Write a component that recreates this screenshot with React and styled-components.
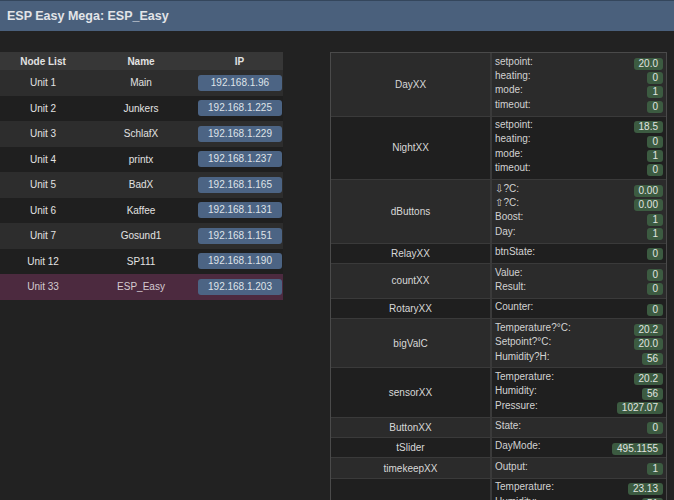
import React from 'react';
import styled, { createGlobalStyle } from 'styled-components';

const GlobalStyle = createGlobalStyle`
  html, body {
    margin: 0;
    padding: 0;
    background: #222222;
    overflow: hidden;
    font-family: "Liberation Sans", Arial, "DejaVu Sans", sans-serif;
    color: #dddddd;
  }
`;

const nodes = [
  { unit: 'Unit 1', name: 'Main', ip: '192.168.1.96' },
  { unit: 'Unit 2', name: 'Junkers', ip: '192.168.1.225' },
  { unit: 'Unit 3', name: 'SchlafX', ip: '192.168.1.229' },
  { unit: 'Unit 4', name: 'printx', ip: '192.168.1.237' },
  { unit: 'Unit 5', name: 'BadX', ip: '192.168.1.165' },
  { unit: 'Unit 6', name: 'Kaffee', ip: '192.168.1.131' },
  { unit: 'Unit 7', name: 'Gosund1', ip: '192.168.1.151' },
  { unit: 'Unit 12', name: 'SP111', ip: '192.168.1.190' },
  { unit: 'Unit 33', name: 'ESP_Easy', ip: '192.168.1.203', current: true },
];

const devices = [
  { name: 'DayXX', values: [['setpoint:', '20.0'], ['heating:', '0'], ['mode:', '1'], ['timeout:', '0']] },
  { name: 'NightXX', values: [['setpoint:', '18.5'], ['heating:', '0'], ['mode:', '1'], ['timeout:', '0']] },
  { name: 'dButtons', values: [['\u21E9?C:', '0.00'], ['\u21E7?C:', '0.00'], ['Boost:', '1'], ['Day:', '1']] },
  { name: 'RelayXX', values: [['btnState:', '0']] },
  { name: 'countXX', values: [['Value:', '0'], ['Result:', '0']] },
  { name: 'RotaryXX', values: [['Counter:', '0']] },
  { name: 'bigValC', values: [['Temperature?°C:', '20.2'], ['Setpoint?°C:', '20.0'], ['Humidity?H:', '56']] },
  { name: 'sensorXX', values: [['Temperature:', '20.2'], ['Humidity:', '56'], ['Pressure:', '1027.07']] },
  { name: 'ButtonXX', values: [['State:', '0']] },
  { name: 'tSlider', values: [['DayMode:', '495.1155']] },
  { name: 'timekeepXX', values: [['Output:', '1']] },
  { name: 'climateXX', values: [['Temperature:', '23.13'], ['Humidity:', '51'], ['Pressure:', '1011.4'], ['Dew:', '12.4']] },
];

const TopBar = styled.header`
  height: 31px;
  box-sizing: border-box;
  border-top: 1px solid #34465c;
  background: #4a607c;
  display: flex;
  align-items: center;
  padding-left: 7px;
`;

const Title = styled.h1`
  margin: 0;
  font-size: 12.5px;
  font-weight: bold;
  color: #e2e4e8;
`;

const Content = styled.main`
  display: flex;
  align-items: flex-start;
  padding-top: 21px;
`;

const NodeTable = styled.div`
  width: 283px;
  display: flex;
  flex-direction: column;
`;

const NodeRow = styled.div`
  display: grid;
  grid-template-columns: 86px 110px 87px;
  align-items: center;
  height: ${p => (p.$head ? '18px' : '25.5px')};
  background: ${p => p.$bg};
  font-size: 10px;
  font-weight: ${p => (p.$head ? 'bold' : 'normal')};
  color: ${p => (p.$current ? '#d4cad0' : '#e2e2e2')};
`;

const NodeCell = styled.div`
  text-align: center;
  padding: ${p => (p.$ip ? '0 1px 0 2px' : '0')};
`;

const IpButton = styled.span`
  display: block;
  height: 16px;
  line-height: 16px;
  border-radius: 3px;
  background: #4c6484;
  color: #dfe3e8;
  text-align: center;
  font-size: 10px;
`;

const DeviceTable = styled.div`
  margin-left: 47px;
  width: 337px;
  box-sizing: border-box;
  border: 1px solid #4a4a4a;
  border-bottom: none;
  display: flex;
  flex-direction: column;
`;

const DeviceRow = styled.div`
  display: grid;
  grid-template-columns: 161px 1fr;
  background: ${p => (p.$odd ? '#1f1f1f' : '#2b2b2b')};
  border-bottom: 1px solid #3a3a3a;
`;

const DeviceName = styled.div`
  display: flex;
  align-items: center;
  justify-content: center;
  border-right: 2px solid #3a3a3a;
  font-size: 10px;
  color: #d8d8d8;
`;

const ValueCell = styled.div`
  padding: 2.5px 3px 2.5px 3px;
  display: flex;
  flex-direction: column;
`;

const ValueLine = styled.div`
  height: 14.4px;
  display: flex;
  align-items: center;
  justify-content: space-between;
  font-size: 10px;
  color: #d2d2d2;
`;

const Label = styled.span`
  align-self: flex-start;
  line-height: 11px;
`;

const Badge = styled.span`
  height: 12px;
  line-height: 12px;
  padding: 0 5px;
  margin-top: 2px;
  border-radius: 3px;
  background: #3c5b41;
  color: #e0e4e0;
  font-size: 10px;
`;

export default function App() {
  return (
    <>
      <GlobalStyle />
      <TopBar>
        <Title>ESP Easy Mega: ESP_Easy</Title>
      </TopBar>
      <Content>
        <NodeTable>
          <NodeRow $head $bg="#373737">
            <NodeCell>Node List</NodeCell>
            <NodeCell>Name</NodeCell>
            <NodeCell>IP</NodeCell>
          </NodeRow>
          {nodes.map((n, i) => (
            <NodeRow
              key={n.unit}
              $current={n.current}
              $bg={n.current ? '#4c2a3f' : i % 2 === 0 ? '#2d2d2d' : '#1f1f1f'}
            >
              <NodeCell>{n.unit}</NodeCell>
              <NodeCell>{n.name}</NodeCell>
              <NodeCell $ip>
                <IpButton>{n.ip}</IpButton>
              </NodeCell>
            </NodeRow>
          ))}
        </NodeTable>
        <DeviceTable>
          {devices.map((d, i) => (
            <DeviceRow key={d.name} $odd={i % 2 === 1}>
              <DeviceName>{d.name}</DeviceName>
              <ValueCell>
                {d.values.map(([label, value]) => (
                  <ValueLine key={label}>
                    <Label>{label}</Label>
                    <Badge>{value}</Badge>
                  </ValueLine>
                ))}
              </ValueCell>
            </DeviceRow>
          ))}
        </DeviceTable>
      </Content>
    </>
  );
}
